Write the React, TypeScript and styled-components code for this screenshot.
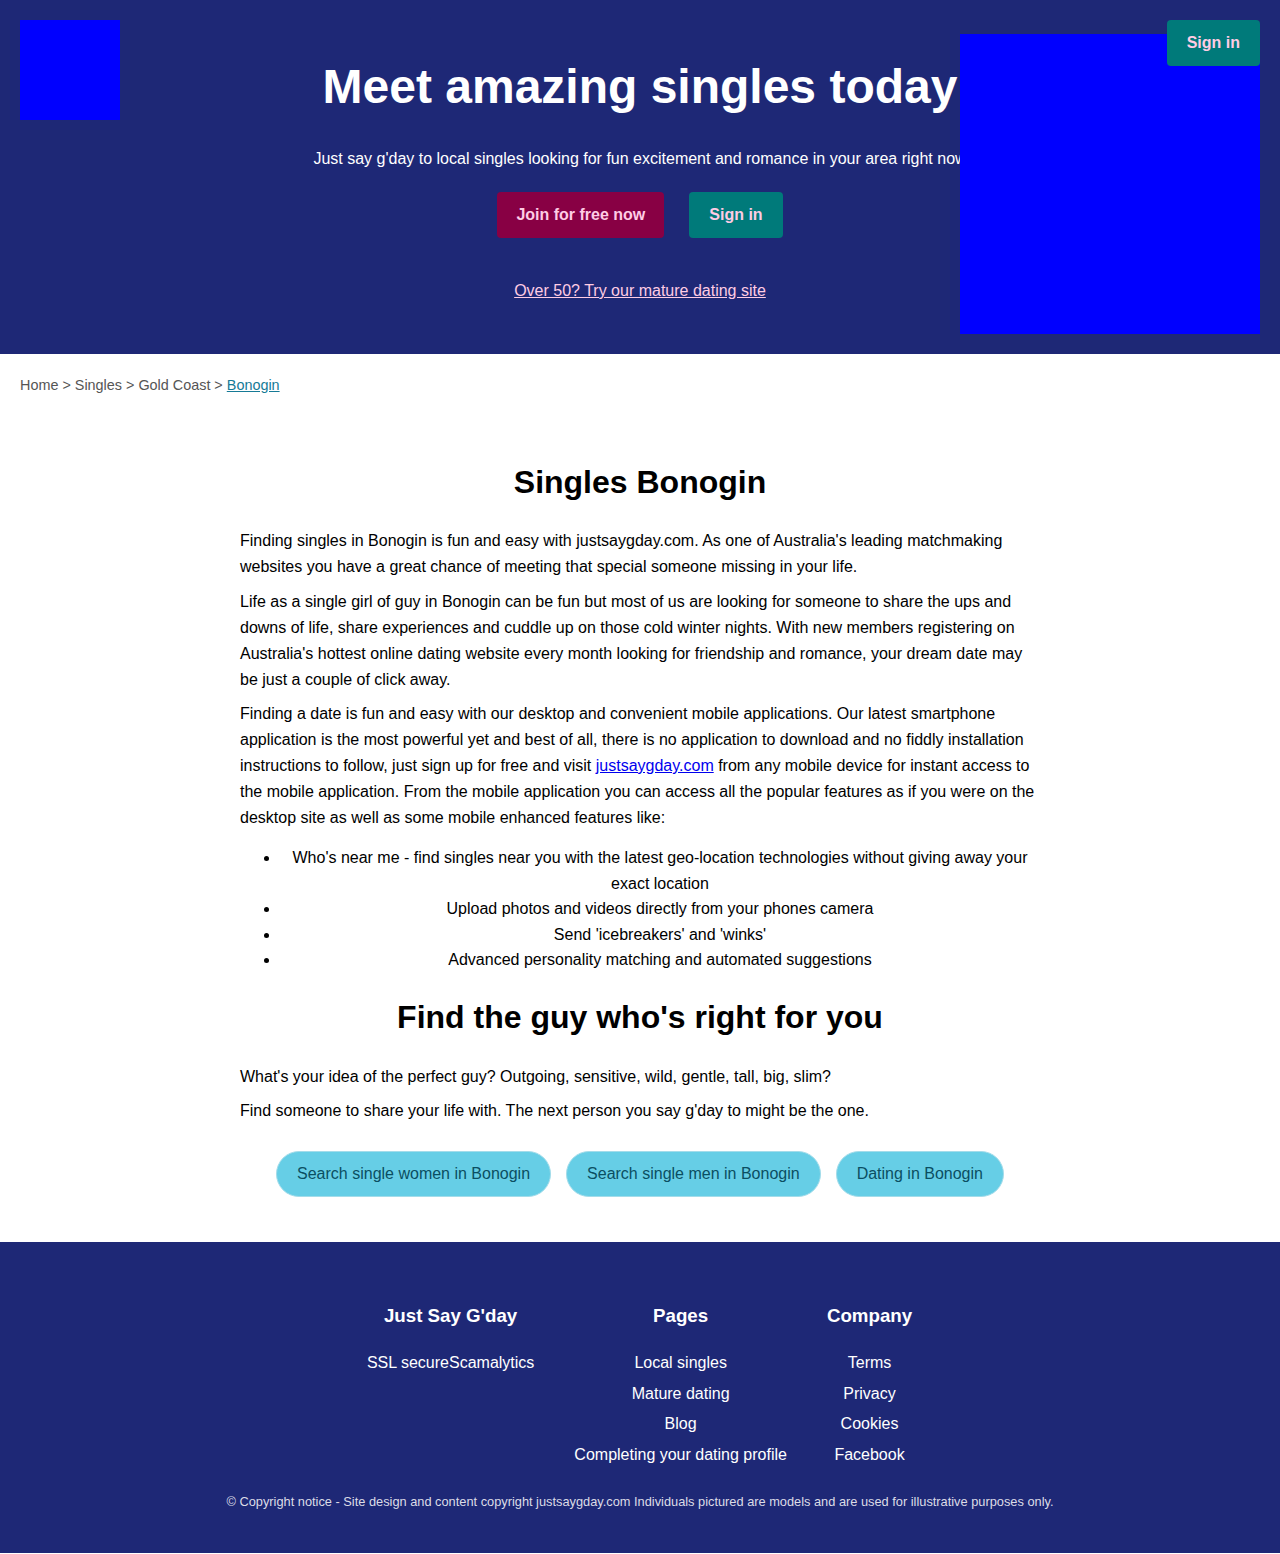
import React from "react";
import styled, { createGlobalStyle } from "styled-components";

const GlobalStyle = createGlobalStyle`
  html, body {
    margin: 0;
    padding: 0;
    background: #ffffff;
    font-family: "Liberation Sans", Arial, Helvetica, sans-serif;
    color: #000000;
  }
  * { box-sizing: border-box; }
`;

const NAVY = "#1e2876";
const PINK = "#ffcce4";

const Header = styled.header`
  position: relative;
  background: ${NAVY};
  height: 354px;
  display: flex;
  flex-direction: column;
  align-items: center;
  color: #ffffff;
`;

const Logo = styled.div`
  position: absolute;
  left: 20px;
  top: 20px;
  width: 100px;
  height: 100px;
  background: #0000ff;
`;

const HeroImage = styled.div`
  position: absolute;
  right: 20px;
  top: 34px;
  width: 300px;
  height: 300px;
  background: #0000ff;
`;

const Button = styled.a<{ $variant: "join" | "sign" }>`
  display: inline-block;
  height: 46px;
  line-height: 46px;
  padding: 0 ${(p) => (p.$variant === "join" ? 19 : 20)}px;
  border-radius: 4px;
  font-size: 16px;
  font-weight: bold;
  color: ${PINK};
  text-decoration: none;
  background: ${(p) => (p.$variant === "join" ? "#880044" : "#007a7a")};
`;

const TopSignIn = styled(Button)`
  position: absolute;
  right: 20px;
  top: 20px;
  z-index: 2;
`;

const HeroTitle = styled.h1`
  margin: 58px 0 0;
  font-size: 48px;
  line-height: 58px;
  font-weight: bold;
  text-align: center;
`;

const HeroSub = styled.p`
  margin: 33px 0 0;
  font-size: 16px;
  line-height: 19px;
  text-align: center;
`;

const ButtonRow = styled.div`
  display: flex;
  gap: 25px;
  margin-top: 24px;
`;

const MatureLink = styled.a`
  margin-top: 43px;
  font-size: 16px;
  line-height: 19px;
  color: ${PINK};
  text-decoration: underline;
`;

const Breadcrumb = styled.nav`
  padding: 23px 20px 0;
  font-size: 14.4px;
  line-height: 17px;
  color: #555555;
`;

const CrumbLink = styled.a`
  color: #167a96;
  text-decoration: underline;
`;

const Main = styled.main`
  width: 800px;
  margin: 70px auto 0;
  padding-bottom: 45px;
`;

const Heading = styled.h2`
  margin: 0;
  font-size: 32px;
  line-height: 37px;
  font-weight: bold;
  text-align: center;
`;

const Para = styled.p<{ $top?: number }>`
  margin: ${(p) => p.$top ?? 0}px 0 8.5px;
  font-size: 16px;
  line-height: 26px;
`;

const InlineLink = styled.a`
  color: #0000ee;
  text-decoration: underline;
`;

const FeatureList = styled.ul`
  margin: 14px 0 0;
  padding-left: 40px;
  font-size: 16px;
  line-height: 25.6px;
`;

const FeatureItem = styled.li`
  text-align: center;
`;

const SecondHeading = styled(Heading)`
  margin-top: 26px;
`;

const PillRow = styled.div`
  display: flex;
  justify-content: center;
  gap: 15px;
  margin-top: 27px;
`;

const Pill = styled.a`
  display: inline-block;
  height: 46px;
  line-height: 44px;
  padding: 0 20px;
  border-radius: 23px;
  border: 1px solid #a3dcea;
  background: #66cee6;
  color: #0b4e62;
  font-size: 16px;
  text-decoration: none;
`;

const Footer = styled.footer`
  background: ${NAVY};
  color: #ffffff;
  padding: 63px 0 44px;
  display: flex;
  flex-direction: column;
  align-items: center;
`;

const FooterCols = styled.div`
  display: flex;
  justify-content: center;
  gap: 40px;
  margin-left: -1px;
`;

const FooterCol = styled.div`
  display: flex;
  flex-direction: column;
  align-items: center;
  text-align: center;
`;

const FooterHeading = styled.h3`
  margin: 0 0 21px;
  font-size: 18.72px;
  line-height: 22px;
  font-weight: bold;
`;

const FooterLink = styled.a`
  display: block;
  font-size: 16px;
  line-height: 30.4px;
  color: #ffffff;
  text-decoration: none;
  white-space: nowrap;
`;

const FooterText = styled.span`
  display: block;
  font-size: 16px;
  line-height: 30.4px;
  white-space: nowrap;
`;

const Copyright = styled.p`
  margin: 24px 0 0;
  font-size: 12.8px;
  line-height: 15px;
  color: #dcdce6;
  text-align: center;
`;

const features = [
  "Who's near me - find singles near you with the latest geo-location technologies without giving away your exact location",
  "Upload photos and videos directly from your phones camera",
  "Send 'icebreakers' and 'winks'",
  "Advanced personality matching and automated suggestions",
];

const pages = ["Local singles", "Mature dating", "Blog", "Completing your dating profile"];
const company = ["Terms", "Privacy", "Cookies", "Facebook"];

export default function App() {
  return (
    <>
      <GlobalStyle />
      <Header>
        <Logo />
        <HeroImage />
        <TopSignIn $variant="sign" href="#">Sign in</TopSignIn>
        <HeroTitle>Meet amazing singles today</HeroTitle>
        <HeroSub>
          Just say g'day to local singles looking for fun excitement and romance in your area right now
        </HeroSub>
        <ButtonRow>
          <Button $variant="join" href="#">Join for free now</Button>
          <Button $variant="sign" href="#">Sign in</Button>
        </ButtonRow>
        <MatureLink href="#">Over 50? Try our mature dating site</MatureLink>
      </Header>

      <Breadcrumb>
        Home &gt; Singles &gt; Gold Coast &gt; <CrumbLink href="#">Bonogin</CrumbLink>
      </Breadcrumb>

      <Main>
        <Heading>Singles Bonogin</Heading>
        <Para $top={27}>
          Finding singles in Bonogin is fun and easy with justsaygday.com. As one of Australia's leading
          matchmaking websites you have a great chance of meeting that special someone missing in your life.
        </Para>
        <Para>
          Life as a single girl of guy in Bonogin can be fun but most of us are looking for someone to share the
          ups and downs of life, share experiences and cuddle up on those cold winter nights. With new members
          registering on Australia's hottest online dating website every month looking for friendship and
          romance, your dream date may be just a couple of click away.
        </Para>
        <Para>
          Finding a date is fun and easy with our desktop and convenient mobile applications. Our latest
          smartphone application is the most powerful yet and best of all, there is no application to download
          and no fiddly installation instructions to follow, just sign up for free and visit{" "}
          <InlineLink href="#">justsaygday.com</InlineLink> from any mobile device for instant access to the
          mobile application. From the mobile application you can access all the popular features as if you were
          on the desktop site as well as some mobile enhanced features like:
        </Para>
        <FeatureList>
          {features.map((f) => (
            <FeatureItem key={f}>{f}</FeatureItem>
          ))}
        </FeatureList>

        <SecondHeading>Find the guy who's right for you</SecondHeading>
        <Para $top={28}>
          What's your idea of the perfect guy? Outgoing, sensitive, wild, gentle, tall, big, slim?
        </Para>
        <Para>Find someone to share your life with. The next person you say g'day to might be the one.</Para>

        <PillRow>
          <Pill href="#">Search single women in Bonogin</Pill>
          <Pill href="#">Search single men in Bonogin</Pill>
          <Pill href="#">Dating in Bonogin</Pill>
        </PillRow>
      </Main>

      <Footer>
        <FooterCols>
          <FooterCol>
            <FooterHeading>Just Say G'day</FooterHeading>
            <FooterText>SSL secureScamalytics</FooterText>
          </FooterCol>
          <FooterCol>
            <FooterHeading>Pages</FooterHeading>
            {pages.map((p) => (
              <FooterLink key={p} href="#">{p}</FooterLink>
            ))}
          </FooterCol>
          <FooterCol>
            <FooterHeading>Company</FooterHeading>
            {company.map((c) => (
              <FooterLink key={c} href="#">{c}</FooterLink>
            ))}
          </FooterCol>
        </FooterCols>
        <Copyright>
          © Copyright notice - Site design and content copyright justsaygday.com Individuals pictured are models
          and are used for illustrative purposes only.
        </Copyright>
      </Footer>
    </>
  );
}
